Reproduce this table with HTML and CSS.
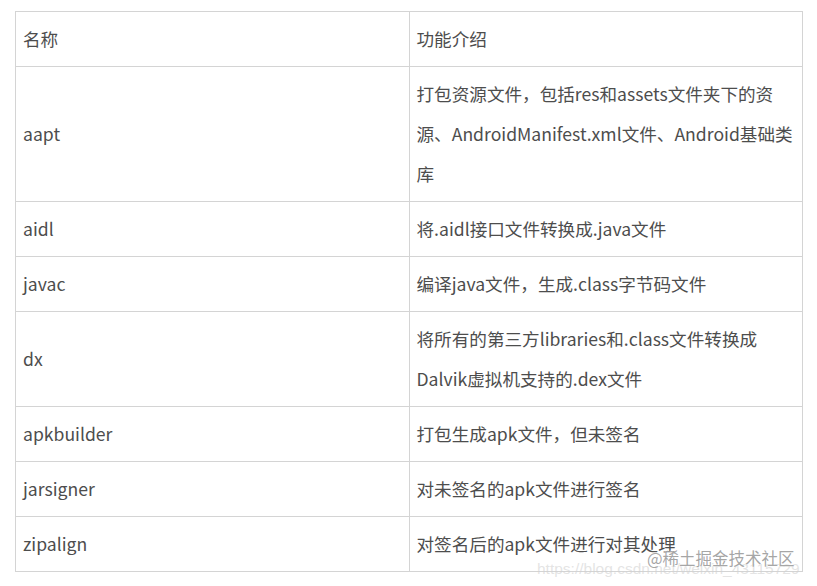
FILE: index.html
```html
<!DOCTYPE html>
<html lang="zh-CN">
<head>
<meta charset="utf-8">
<title>表格</title>
<link rel="stylesheet" href="styles.css">
</head>
<body>
<div class="page">
  <table class="tools">
    <tr><td>名称</td><td>功能介绍</td></tr>
    <tr><td>aapt</td><td class="nw">打包资源文件，包括res和assets文件夹下的资<br>源、AndroidManifest.xml文件、Android基础类<br>库</td></tr>
    <tr><td>aidl</td><td>将.aidl接口文件转换成.java文件</td></tr>
    <tr><td>javac</td><td>编译java文件，生成.class字节码文件</td></tr>
    <tr><td>dx</td><td class="nw">将所有的第三方libraries和.class文件转换成<br>Dalvik虚拟机支持的.dex文件</td></tr>
    <tr><td>apkbuilder</td><td>打包生成apk文件，但未签名</td></tr>
    <tr><td>jarsigner</td><td>对未签名的apk文件进行签名</td></tr>
    <tr><td>zipalign</td><td>对签名后的apk文件进行对其处理</td></tr>
  </table>
  <div class="wm-url">https://blog.csdn.net/weixin_43115729</div>
  <div class="wm">@稀土掘金技术社区</div>
</div>
</body>
</html>
```
FILE: styles.css
```css
html, body {
  margin: 0;
  padding: 0;
  background: #ffffff;
}
.page {
  position: relative;
  width: 817px;
  height: 586px;
  padding: 11px 15px 0 15px;
  box-sizing: border-box;
  font-family: "Noto Sans CJK SC", "Noto Sans", sans-serif;
  overflow: hidden;
}
.tools {
  width: 788px;
  border-collapse: collapse;
  table-layout: fixed;
  color: #4d4d4d;
  font-size: 17.6px;
  line-height: 40px;
}
.tools td {
  border: 1px solid #d4d4d4;
  padding: 7px 7px;
  vertical-align: middle;
  width: 50%;
}
.tools td.nw {
  white-space: nowrap;
}
.wm {
  position: absolute;
  left: 647px;
  top: 546px;
  font-size: 16.5px;
  line-height: 24px;
  color: rgba(150, 150, 150, 0.85);
  text-shadow: 0 0 2px #fff, 0 0 1px #fff;
}
.wm-url {
  position: absolute;
  left: 537px;
  top: 559px;
  font-family: "Liberation Sans", sans-serif;
  font-size: 15.5px;
  line-height: 20px;
  color: rgba(210, 210, 210, 0.6);
  white-space: nowrap;
}
```
